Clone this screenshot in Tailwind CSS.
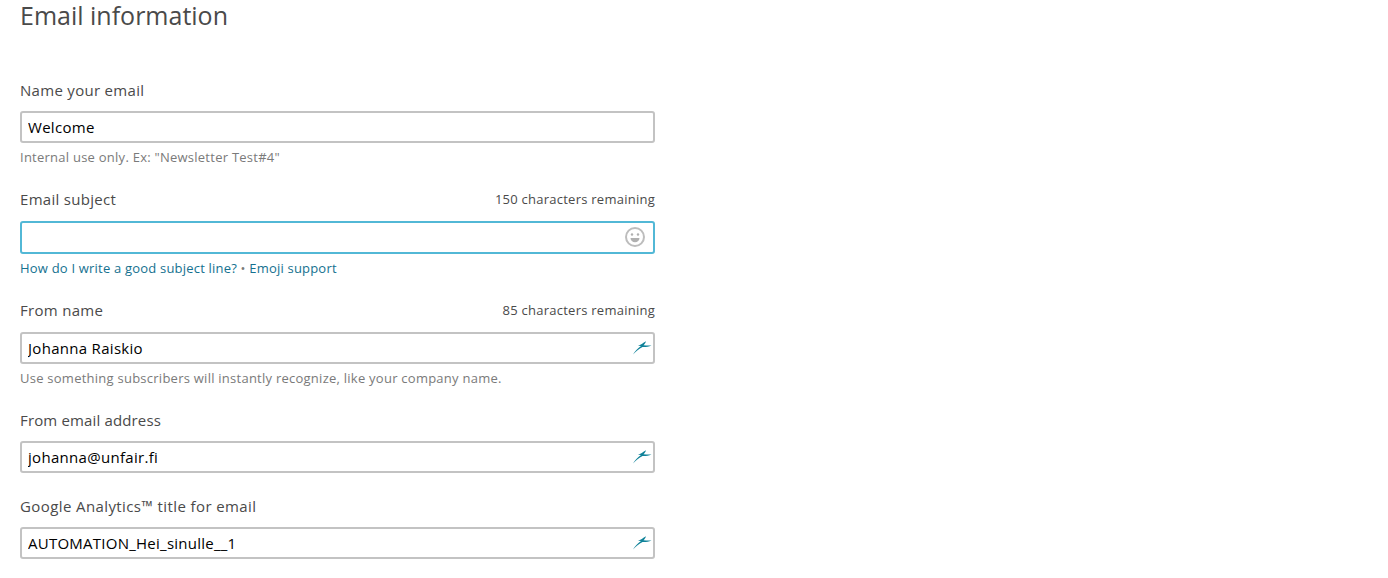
<!DOCTYPE html>
<html lang="en">
<head>
    <meta charset="UTF-8">
    <title>Email information</title>
    <script src="https://cdn.jsdelivr.net/npm/@tailwindcss/browser@4"></script>
</head>
<body class="bg-white h-[578px] overflow-hidden font-['Open_Sans',sans-serif] text-[#4a4a4a]">
    <div class="w-[635px] ml-[20px]">
        <h1 class="text-[25px] leading-[30px] font-medium text-[#4a4a4a] mb-[50px]">Email information</h1>

        <!-- Name -->
        <div class="flex justify-between items-end h-[20px] mb-[11px]">
            <label class="text-[15px] leading-[20px] tracking-[0.3px]">Name your email</label>
        </div>
        <input type="text" value="Welcome" class="block w-full h-[32px] border-2 border-[#c3c3c3] rounded-[3px] px-[6px] text-[15px] tracking-[0.3px] font-medium text-black outline-none">
        <p class="text-[13px] leading-[16px] tracking-[0.25px] mt-[6px] mb-[24px] text-[#7a7a7a] h-[16px]">Internal use only. Ex: "Newsletter Test#4"</p>

        <!-- Subject -->
        <div class="flex justify-between items-end h-[20px] mb-[12px]">
            <label class="text-[15px] leading-[20px] tracking-[0.3px]">Email subject</label>
            <span class="text-[13px] leading-[20px] tracking-[0.25px]">150 characters remaining</span>
        </div>
        <div class="relative">
            <input type="text" class="block w-full h-[33px] border-2 border-[#52b8d6] rounded-[3px] px-[6px] text-[15px] text-black outline-none">
            <svg class="absolute right-[10px] top-[6px]" width="20" height="20" viewBox="0 0 20 20" fill="none">
                <circle cx="10" cy="10" r="9" stroke="#bdbdbd" stroke-width="2"/>
                <circle cx="7" cy="7.500" r="1.200" fill="#b0b0b0"/>
                <circle cx="13" cy="7.500" r="1.200" fill="#b0b0b0"/>
                <path d="M5.500 11h9c0 2.600-2 4.300-4.500 4.300S5.500 13.600 5.500 11z" fill="#b0b0b0"/>
            </svg>
        </div>
        <p class="text-[13px] leading-[16px] tracking-[0.2px] mt-[6px] mb-[24px] text-[#7a7a7a] h-[16px]"><a class="text-[#15718f] font-medium">How do I write a good subject line?</a> • <a class="text-[#15718f] font-medium">Emoji support</a></p>

        <!-- From name -->
        <div class="flex justify-between items-end h-[20px] mb-[12px]">
            <label class="text-[15px] leading-[20px] tracking-[0.3px]">From name</label>
            <span class="text-[13px] leading-[20px] tracking-[0.25px]">85 characters remaining</span>
        </div>
        <div class="relative">
            <input type="text" value="Johanna Raiskio" class="block w-full h-[32px] border-2 border-[#c3c3c3] rounded-[3px] px-[6px] text-[15px] tracking-[0.3px] font-medium text-black outline-none">
            <svg class="absolute right-[2px] top-[7px]" width="22" height="18" viewBox="0 0 22 18"><path d="M2 15.500C4 12 7 9 10 7L7 6.800C9.500 6 12 4 15 2.200C14.500 4 13.500 5.200 12.500 6.200C15 6.600 18 6.500 20.500 6.500C17.500 7.600 14.500 8.200 11.500 8C8 9.500 5 12.500 2 15.500Z" fill="#0f8299"/></svg>
        </div>
        <p class="text-[13px] leading-[16px] tracking-[0.25px] mt-[6px] mb-[24px] text-[#7a7a7a] h-[16px]">Use something subscribers will instantly recognize, like your company name.</p>

        <!-- From email -->
        <div class="flex justify-between items-end h-[20px] mb-[11px]">
            <label class="text-[15px] leading-[20px] tracking-[0.15px]">From email address</label>
        </div>
        <div class="relative mb-[23px]">
            <input type="text" value="johanna@unfair.fi" class="block w-full h-[32px] border-2 border-[#c3c3c3] rounded-[3px] px-[6px] text-[15px] tracking-[0.3px] font-medium text-black outline-none">
            <svg class="absolute right-[2px] top-[7px]" width="22" height="18" viewBox="0 0 22 18"><path d="M2 15.500C4 12 7 9 10 7L7 6.800C9.500 6 12 4 15 2.200C14.500 4 13.500 5.200 12.500 6.200C15 6.600 18 6.500 20.500 6.500C17.500 7.600 14.500 8.200 11.500 8C8 9.500 5 12.500 2 15.500Z" fill="#0f8299"/></svg>
        </div>

        <!-- Analytics -->
        <div class="flex justify-between items-end h-[20px] mb-[11px]">
            <label class="text-[15px] leading-[20px] tracking-[0.4px]">Google Analytics™ title for email</label>
        </div>
        <div class="relative">
            <input type="text" value="AUTOMATION_Hei_sinulle__1" class="block w-full h-[32px] border-2 border-[#c3c3c3] rounded-[3px] px-[6px] text-[15px] tracking-[0.25px] font-medium text-black outline-none">
            <svg class="absolute right-[2px] top-[7px]" width="22" height="18" viewBox="0 0 22 18"><path d="M2 15.500C4 12 7 9 10 7L7 6.800C9.500 6 12 4 15 2.200C14.500 4 13.500 5.200 12.500 6.200C15 6.600 18 6.500 20.500 6.500C17.500 7.600 14.500 8.200 11.500 8C8 9.500 5 12.500 2 15.500Z" fill="#0f8299"/></svg>
        </div>
    </div>
</body>
</html>
